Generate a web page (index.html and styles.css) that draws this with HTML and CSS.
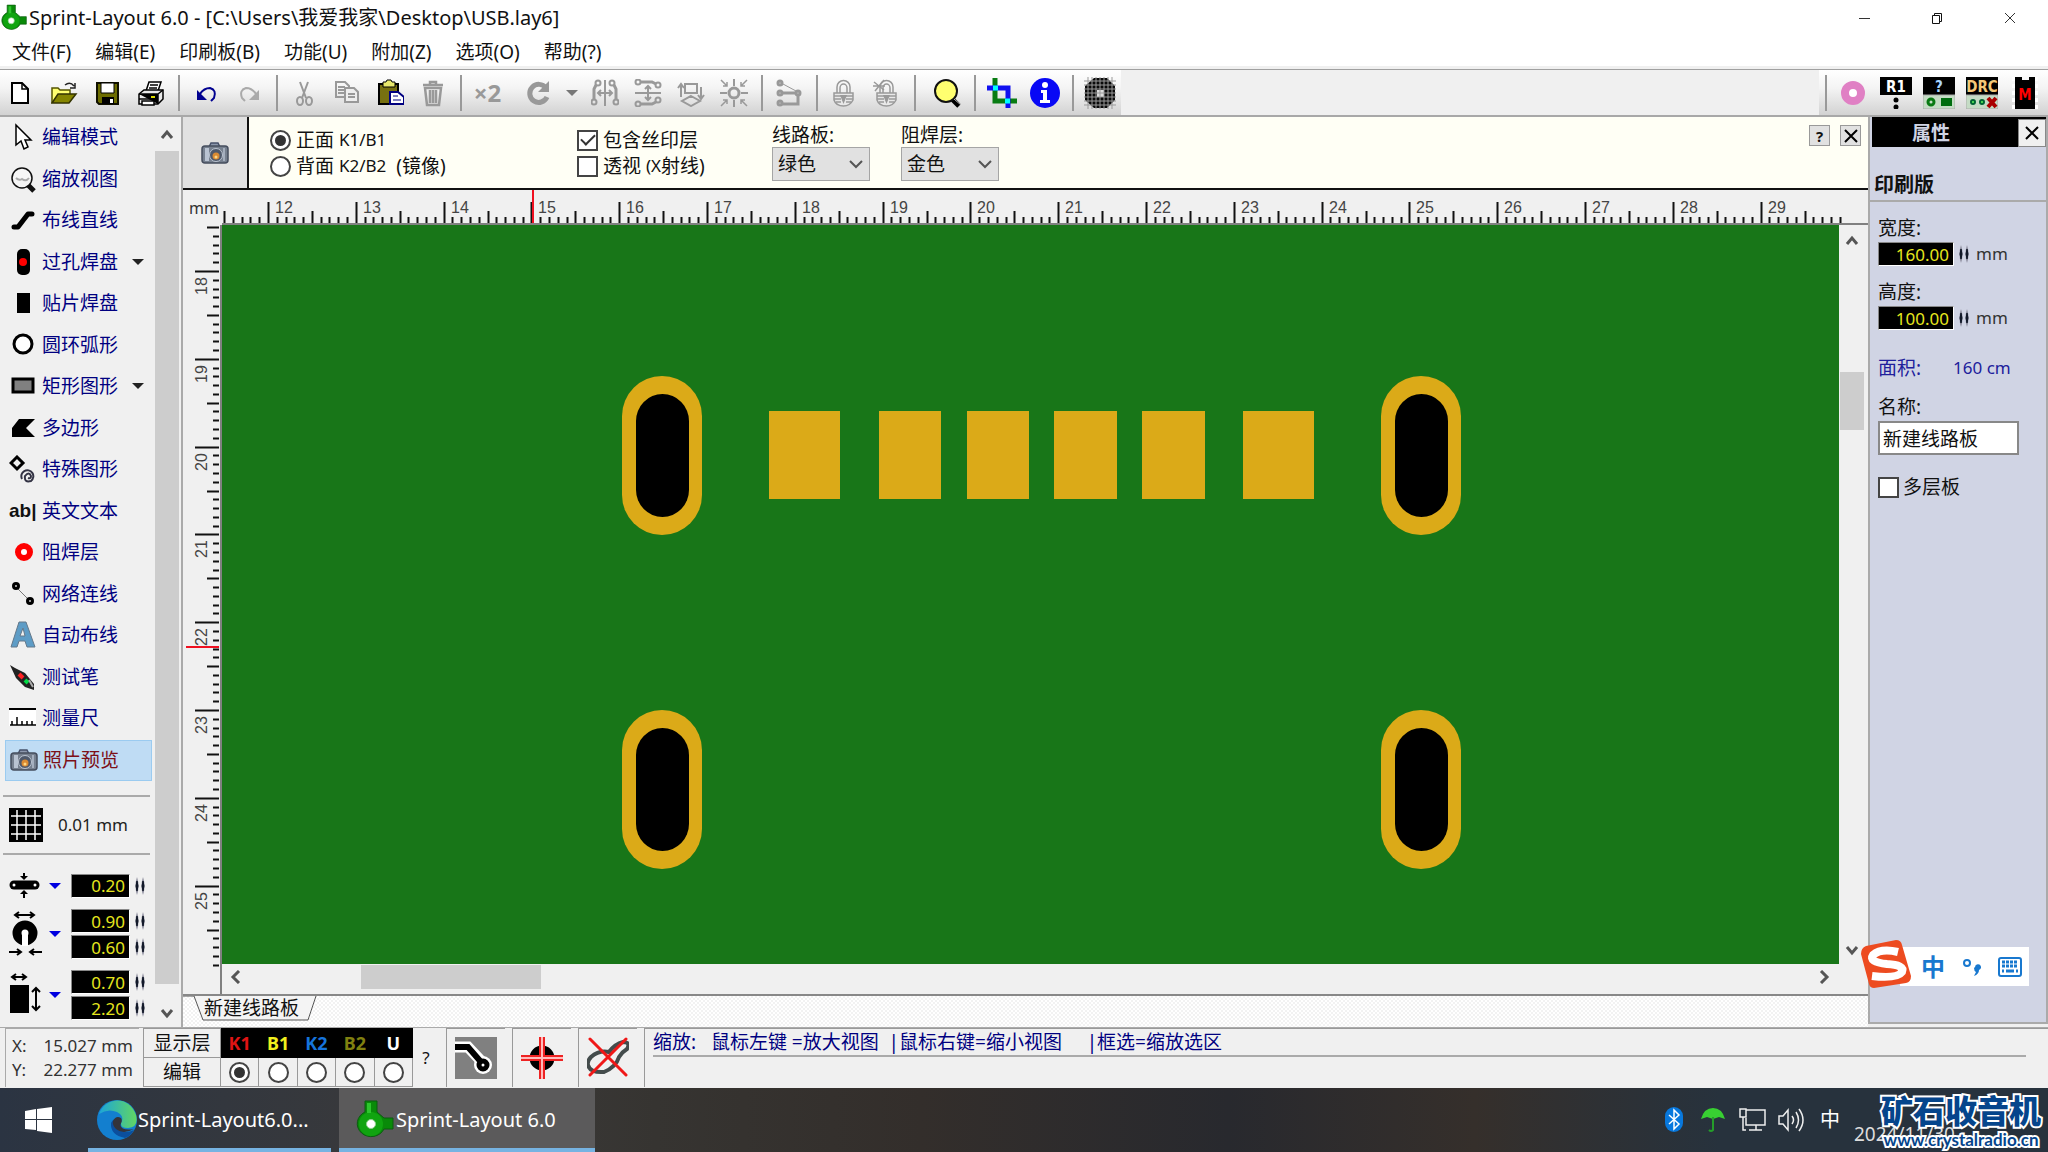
FILE: index.html
```html
<!DOCTYPE html>
<html lang="zh-CN">
<head>
<meta charset="utf-8">
<title>Sprint-Layout 6.0</title>
<link rel="stylesheet" href="styles.css">
</head>
<body>
<svg class="defs" aria-hidden="true">
  <defs>
    <symbol id="spin" viewBox="0 0 10 18"><path d="M2 0Q5 9 2 18Q-1 9 2 0ZM8 0Q11 9 8 18Q5 9 8 0Z" fill="#889"/><path d="M2 4Q4 9 2 14Q0 9 2 4ZM8 4Q10 9 8 14Q6 9 8 4Z" fill="#111828" stroke="#111828" stroke-width="1"/></symbol>
    <symbol id="tri" viewBox="0 0 12 8"><path d="M0 1H12L6 7Z" fill="currentColor"/></symbol>
    <symbol id="up" viewBox="0 0 14 12"><path d="M2 10L7 4L12 10" fill="none" stroke="#555" stroke-width="3"/></symbol>
    <symbol id="down" viewBox="0 0 14 12"><path d="M2 3L7 9L12 3" fill="none" stroke="#555" stroke-width="3"/></symbol>
    <symbol id="camera" viewBox="0 0 28 24">
      <path d="M8 6L10 2H17L19 6" fill="#8c98ad" stroke="#46506a" stroke-width="1.5"/>
      <rect x="1" y="5" width="26" height="17" rx="3" fill="#76808f" stroke="#454d5e" stroke-width="1.5"/>
      <rect x="4" y="7" width="4" height="13" fill="#b9c3d2"/><rect x="22" y="7" width="2" height="13" fill="#a5afbe"/>
      <circle cx="15" cy="14" r="6.500" fill="#4e586a" stroke="#bcc5d2"/>
      <circle cx="15" cy="15" r="3.500" fill="#d98a33"/><circle cx="15" cy="16" r="1.500" fill="#ffd680"/>
    </symbol>
    <symbol id="pcb" viewBox="0 0 38 40">
      <path d="M9 1H21V12L28 18H37V29H28A14 13 0 1 1 9 12Z" fill="#098a09" stroke="#0b5d10"/>
      <circle cx="15" cy="24" r="12" fill="#10a410"/><path d="M11 3H15V13H11Z" fill="#2dc52d"/><circle cx="15" cy="24" r="4.500" fill="#fff" stroke="#8fd08f"/>
    </symbol>
    <symbol id="lock" viewBox="0 0 28 28"><path d="M7 14V8A6 6 0 0 1 20 8V14M10 14V9A3.500 4 0 0 1 17 9V14" fill="none" stroke="#999" stroke-width="1.500"/><path d="M4 14H23V21Q20 27 13.500 27Q6 27 4 21Z" fill="#e8e8e8" stroke="#999" stroke-width="1.500"/><path d="M4 17H11M16 17H23M4 20H11M16 20H23M6 23H11M16 23H21" stroke="#999" stroke-width="1.500"/><path d="M10 16H17L13.500 25Z" fill="#999"/></symbol>
  </defs>
</svg>

<header class="titlebar">
  <svg class="app-icon" viewBox="0 0 38 40"><use href="#pcb"/></svg>
  <h1>Sprint-Layout 6.0 - [C:\Users\我爱我家\Desktop\USB.lay6]</h1>
  <div class="window-buttons">
    <button aria-label="最小化"><svg width="12" height="12"><path d="M1 6.500H12" stroke="#333"/></svg></button>
    <button aria-label="还原"><svg width="12" height="12" fill="none" stroke="#111"><path d="M1.500 3.500H8.500V11.500H1.500Z M3.500 3V1.500H10.500V9.500H9"/></svg></button>
    <button aria-label="关闭"><svg width="12" height="12"><path d="M1 1L11 11M11 1L1 11" stroke="#333"/></svg></button>
  </div>
</header>

<nav class="menu">
  <button>文件(F)</button><button>编辑(E)</button><button>印刷板(B)</button><button>功能(U)</button><button>附加(Z)</button><button>选项(O)</button><button>帮助(?)</button>
</nav>

<div class="toolbar">
  <div class="tools">
    <button aria-label="新建"><svg><path d="M4 4H14L20 10V24H4Z" fill="#fff" stroke="#000" stroke-width="2"/><path d="M14 4V10H20" fill="none" stroke="#000" stroke-width="1.500"/></svg></button>
    <button aria-label="打开"><svg><path d="M1 24V9H7L9 11H19V15" fill="#ffff70" stroke="#555500" stroke-width="1.500"/><path d="M1 24L7 15H25L18 24Z" fill="#858500" stroke="#333300" stroke-width="1.500"/><path d="M14 6Q19 2 23 7M24 4V9H19" fill="none" stroke="#222" stroke-width="1.500"/></svg></button>
    <button aria-label="保存"><svg><path d="M3 4H24V25H5L3 23Z" fill="#6d6d00" stroke="#111100" stroke-width="2"/><path d="M7 4H20V14H7Z" fill="#fff" stroke="#000"/><path d="M8 18H20V25H8Z" fill="#000"/><path d="M16 20H19V24H16Z" fill="#fff"/></svg></button>
    <button aria-label="打印"><svg stroke="#000" stroke-width="1.500"><path d="M9 12L12 3H24L21 12Z" fill="#fff"/><path d="M13 6H21M12 9H20"/><path d="M2 15L7 11H26V20L21 25H2Z" fill="#e8e8e8"/><path d="M2 15H21V25M21 15L26 11M2 20H21"/><path d="M5 22H17V26H5Z" fill="#fff"/><path d="M14 18H18" stroke="#dd0" stroke-width="2"/></svg></button>
    <i class="sep"></i>
    <button aria-label="撤销"><svg><path d="M8 15Q12 9 18 9Q25 11 22 19L19 22" fill="none" stroke="#000090" stroke-width="2"/><path d="M5 11V21H15Z" fill="#000090"/></svg></button>
    <button aria-label="重做" disabled><svg><path d="M21 15Q17 9 11 9Q4 11 7 19L10 22" fill="none" stroke="#aaa" stroke-width="2"/><path d="M24 11V21H14Z" fill="#aaa"/></svg></button>
    <i class="sep"></i>
    <button aria-label="剪切" disabled><svg class="dim"><path d="M10 3L16 19M18 3L12 19"/><ellipse cx="10" cy="22" rx="3" ry="4"/><ellipse cx="19" cy="22" rx="3" ry="4"/></svg></button>
    <button aria-label="复制" disabled><svg class="dim"><path d="M3 3H12L16 7V18H3Z M5 8H12M5 11H12M5 14H12"/><path d="M12 9H21L25 13V23H12Z" fill="#eee"/><path d="M15 15H22M15 18H22"/></svg></button>
    <button aria-label="粘贴"><svg><path d="M3 5H22V25H3Z" fill="#777010" stroke="#000" stroke-width="2"/><path d="M7 3H10L11 1H15L16 3H19V8H7Z" fill="#e8e86c" stroke="#000"/><path d="M14 13H22L28 18V25H14Z" fill="#fff" stroke="#000080" stroke-width="2"/><path d="M17 17H22M17 21H25" stroke="#000080"/></svg></button>
    <button aria-label="删除" disabled><svg class="dim"><path d="M4 6H24M11 6V3H17V6M6 9H22L20 26H8Z M11 11V24M14 11V24M17 11V24" stroke-width="2.500"/></svg></button>
    <i class="sep"></i>
    <button class="times" disabled>×2</button>
    <button class="rotate" aria-label="旋转" disabled><svg><path d="M22 9A9 9 0 1 0 23 18" fill="none" stroke="#999" stroke-width="5"/><path d="M25 2V13H14Z" fill="#999"/></svg></button>
    <button class="drop" aria-label="旋转角度" disabled><svg class="small-tri"><use href="#tri"/></svg></button>
    <button aria-label="水平镜像" disabled><svg class="dim"><path d="M14 1V27M7 14H21M10 11L7 14L10 17M18 11L21 14L18 17"/><circle cx="7" cy="4" r="2.500"/><circle cx="3" cy="23" r="2.500"/><circle cx="21" cy="4" r="2.500"/><circle cx="25" cy="23" r="2.500"/><path d="M5 6L3 10V20M23 6L25 10V20" stroke-width="3"/></svg></button>
    <button aria-label="垂直镜像" disabled><svg class="dim"><path d="M1 14H27M14 7V21M11 10L14 7L17 10M11 18L14 21L17 18"/><circle cx="4" cy="3" r="2.500"/><circle cx="24" cy="6" r="2.500"/><circle cx="4" cy="25" r="2.500"/><circle cx="24" cy="21" r="2.500"/><path d="M7 3H18L22 5M7 25H18L22 23" stroke-width="3"/></svg></button>
    <button aria-label="翻面" disabled><svg class="dim"><path d="M8 5H20V14H8Z M14 17L23 22L14 27L5 22Z M4 18V6M1 9L4 5L7 9M24 8V19M21 16L24 20L27 16" stroke-width="2"/></svg></button>
    <button aria-label="对齐" disabled><svg class="dim"><circle cx="14" cy="14" r="5" stroke-width="3"/><path d="M14 0V7M14 21V28M0 14H7M21 14H28"/><path d="M1 1L7 7M7 3V7H3M27 1L21 7M21 3V7H25M1 27L7 21M3 21H7V25M27 27L21 21M21 25V21H25" stroke-width="1.500"/></svg></button>
    <i class="sep"></i>
    <button aria-label="连接" disabled><svg class="dim"><circle cx="5" cy="4" r="2" stroke-width="3"/><circle cx="5" cy="14" r="2" stroke-width="3"/><circle cx="5" cy="24" r="2" stroke-width="3"/><circle cx="23" cy="14" r="2" stroke-width="3"/><path d="M8 5L21 12" stroke-width="1"/><path d="M8 14H20M8 25H23V17" stroke-width="3"/></svg></button>
    <i class="sep"></i>
    <button aria-label="锁定" disabled><svg><use href="#lock"/></svg></button>
    <button aria-label="解锁" disabled><svg><use href="#lock"/><path d="M1 3L11 11M11 1L2 12M0 7H12" stroke="#999" stroke-width="1.500"/></svg></button>
    <i class="sep"></i>
    <button class="wide" aria-label="缩放"><svg class="info"><path d="M20 21L27 28" stroke="#000" stroke-width="5"/><circle cx="14" cy="13" r="11" fill="#ffff70" stroke="#111" stroke-width="2"/><path d="M22 21L29 27" stroke="#bbb" stroke-width="1"/></svg></button>
    <i class="sep"></i>
    <button aria-label="裁剪"><svg class="info" fill="none" stroke-width="5"><path d="M8 0V23H30" stroke="#087c12"/><path d="M0 10H21V30" stroke="#1010f0"/><path d="M6 10H11M18 23H23" stroke="#0ff"/></svg></button>
    <button aria-label="信息"><svg class="info"><circle cx="15" cy="15" r="15" fill="#0808f5"/><circle cx="15" cy="7" r="3" fill="#fff"/><path d="M11 12H17V22H20V25H10V22H13V15H11Z" fill="#fff"/></svg></button>
    <i class="sep"></i>
    <button aria-label="网格"><svg class="chip"><path d="M10 1H23L31 9V23L23 31H10L1 23V9Z" fill="#0a0a0a"/><path d="M13 13H20V20H13Z" fill="#ddd"/><path d="M4 0V32M8 0V32M12 0V32M16 0V32M20 0V32M24 0V32M28 0V32M0 4H32M0 8H32M0 12H32M0 16H32M0 20H32M0 24H32M0 28H32" stroke="#999" stroke-width="1"/></svg></button>
  </div>
  <div class="tools tools-right">
    <i class="sep"></i>
    <button aria-label="焊盘"><svg><circle cx="14" cy="14" r="8" fill="#fff" stroke="#e080c4" stroke-width="8"/></svg></button>
    <button aria-label="元件"><svg class="chip"><path d="M0 0H32V18H0Z" fill="#000"/><text x="16" y="15" class="chip-text" fill="#fff">R1</text><circle cx="16" cy="23" r="2.500"/><circle cx="16" cy="30" r="2.500"/></svg></button>
    <button aria-label="查询"><svg class="chip"><path d="M0 0H32V18H0Z"/><path d="M0 18H32V32H0Z" fill="#c5dcc5" stroke="#aaa"/><text x="16" y="15" class="chip-text" fill="#a9d5ff">?</text><circle cx="8" cy="25" r="3" fill="none" stroke="#087a12" stroke-width="3"/><path d="M18 21H29V29H18Z" fill="#006d10"/></svg></button>
    <button aria-label="DRC"><svg class="chip"><path d="M0 0H32V18H0Z"/><path d="M0 18H32V32H0Z" fill="#c5dcc5" stroke="#aaa"/><text x="16" y="15" class="chip-text" fill="#f3c878">DRC</text><circle cx="7" cy="25" r="2" fill="#5cf45c" stroke="#063" stroke-width="2"/><circle cx="16" cy="25" r="2" fill="#5cf45c" stroke="#063" stroke-width="2"/><path d="M22 21L30 30M30 21L22 30" stroke="#a00" stroke-width="4"/></svg></button>
    <button aria-label="宏"><svg class="chip"><path d="M5 0V32M27 0V32" stroke="#fff" stroke-width="4" stroke-dasharray="4 3"/><path d="M6 0H13V3H20V0H26V32H6Z"/><text x="16" y="23" class="chip-text" fill="#f00">M</text></svg></button>
  </div>
</div>

<main>
  <aside class="side">
    <div class="side-body">
      <nav class="modes">
        <button><svg><path d="M7 2V22L12 18L15 26L19 24L16 17H22Z" fill="#fff" stroke="#000" stroke-width="1.500"/></svg>编辑模式</button>
        <button><svg><path d="M18 19L25 26" stroke="#111" stroke-width="5"/><circle cx="13" cy="13" r="10" fill="#f6f6f6" stroke="#111" stroke-width="1.500"/><path d="M7 13Q10 16 13 14Q17 17 20 13" fill="none" stroke="#aaa" stroke-width="2"/></svg>缩放视图</button>
        <button><svg><path d="M5 21H9L19 8H23" fill="none" stroke="#000" stroke-width="5" stroke-linecap="round" stroke-linejoin="round"/></svg>布线直线</button>
        <button><svg><rect x="8" y="1" width="13" height="26" rx="5"/><circle cx="14" cy="14" r="4" fill="#f00"/></svg>过孔焊盘<svg class="small-tri"><use href="#tri"/></svg></button>
        <button><svg><path d="M8 4H21V24H8Z"/></svg>贴片焊盘</button>
        <button><svg><circle cx="14" cy="13" r="9" fill="#fff" stroke="#000" stroke-width="3"/></svg>圆环弧形</button>
        <button><svg><path d="M4 7H24V20H4Z" fill="#808080" stroke="#000" stroke-width="3"/></svg>矩形图形<svg class="small-tri"><use href="#tri"/></svg></button>
        <button><svg><path d="M3 23V14L10 5H26L17 14L26 23Z"/></svg>多边形</button>
        <button><svg fill="none"><path d="M8 2L14 8L8 14L2 8Z" stroke="#000" stroke-width="3"/><path d="M13 24A6 6 0 1 1 22 26Q15 28 16 21Q20 16 22 21Q22 24 19 23" stroke="#334" stroke-width="2"/></svg>特殊图形</button>
        <button><span class="ab">ab|</span>英文文本</button>
        <button><svg><circle cx="15" cy="14" r="6" fill="#fff" stroke="#f00" stroke-width="6"/></svg>阻焊层</button>
        <button><svg><path d="M7 7L21 21" stroke="#777"/><circle cx="7" cy="6" r="2.500" fill="#ccc" stroke="#000" stroke-width="3"/><circle cx="21" cy="21" r="2.500" fill="#ccc" stroke="#000" stroke-width="3"/></svg>网络连线</button>
        <button><svg><path d="M2 26L10 1H17L26 26H18L16 20H10L8 26ZM11 15H16L14 7Z" fill="#5d9cc6" stroke="#64788a"/></svg>自动布线</button>
        <button><svg><path d="M1 2L6 5L16 10L25 21V27L16 24L7 15Z" fill="#222"/><path d="M10 11L14 15" stroke="#f22" stroke-width="4"/><path d="M16 17L19 20" stroke="#0d4" stroke-width="4"/><path d="M20 17L24 24" stroke="#aaa" stroke-width="2"/></svg>测试笔</button>
        <button><svg><path d="M0 5H27V22H0Z" fill="#fff"/><path d="M0 5H27" stroke="#000" stroke-width="2"/><path d="M1 21H27M3 21V17M8 21V13M13 21V17M18 21V17M23 21V17" stroke="#000" stroke-width="1.500"/></svg>测量尺</button>
        <button class="active"><svg><use href="#camera"/></svg>照片预览</button>
      </nav>
      <hr>
      <button class="grid-size"><svg><path d="M0 0H34V34H0Z"/><path d="M8 2V32M17 2V32M26 2V32M2 8H32M2 17H32M2 26H32" stroke="#fff" stroke-width="1.500"/></svg>0.01 mm</button>
      <hr>
      <div class="params">
        <div class="param">
          <svg><path d="M5 12H26" stroke="#000" stroke-width="9" stroke-linecap="round"/><circle cx="5" cy="12" r="1.500" fill="#fff"/><circle cx="26" cy="12" r="1.500" fill="#fff"/><path d="M11 3H19L15 7ZM14 0H16V3H14ZM11 21H19L15 17ZM14 21H16V25H14Z"/></svg>
          <button class="blue" aria-label="线宽"><svg class="small-tri"><use href="#tri"/></svg></button>
          <div class="values"><div><input aria-label="走线宽度" value="0.20"><svg class="spin"><use href="#spin"/></svg></div></div>
        </div>
        <div class="param">
          <svg class="tall"><path d="M7 5H24M10 2L6 5L10 8M21 2L25 5L21 8M0 42H11M8 39L12 42L8 45M33 42H22M25 39L21 42L25 45" fill="none" stroke="#000" stroke-width="2"/><circle cx="16" cy="23" r="8" fill="#fff" stroke="#000" stroke-width="9"/><path d="M13 25H19V36H13Z" fill="#fff"/><path d="M12 27V34M20 27V34" stroke="#000" stroke-width="2"/></svg>
          <button class="blue" aria-label="焊盘尺寸"><svg class="small-tri"><use href="#tri"/></svg></button>
          <div class="values"><div><input aria-label="焊盘外径" value="0.90"><svg class="spin"><use href="#spin"/></svg></div><div><input aria-label="焊盘孔径" value="0.60"><svg class="spin"><use href="#spin"/></svg></div></div>
        </div>
        <div class="param">
          <svg class="tall"><path d="M1 14H20V42H1Z"/><path d="M4 6H16M7 3L3 6L7 9M13 3L17 6L13 9M27 18V38M23 21L27 17L31 21M23 35L27 39L31 35" fill="none" stroke="#000" stroke-width="2"/></svg>
          <button class="blue" aria-label="贴片尺寸"><svg class="small-tri"><use href="#tri"/></svg></button>
          <div class="values"><div><input aria-label="贴片宽度" value="0.70"><svg class="spin"><use href="#spin"/></svg></div><div><input aria-label="贴片高度" value="2.20"><svg class="spin"><use href="#spin"/></svg></div></div>
        </div>
      </div>
    </div>
    <div class="vscroll side-scroll"><svg><use href="#up"/></svg><i class="thumb"></i><svg><use href="#down"/></svg></div>
  </aside>

  <section class="work">
    <form class="photo">
      <button type="button" class="camera" aria-label="照片预览"><svg><use href="#camera"/></svg></button>
      <div class="options sides">
        <label><input type="radio" name="side" checked>正面&nbsp; <span>K1/B1</span></label>
        <label><input type="radio" name="side">背面&nbsp; <span>K2/B2</span>&nbsp; (镜像)</label>
      </div>
      <div class="options checks">
        <label><input type="checkbox" checked>包含丝印层</label>
        <label><input type="checkbox">透视&nbsp;<span>(X</span>射线)</label>
      </div>
      <div class="combo"><label for="board">线路板:</label><div class="select"><select id="board"><option>绿色</option></select><svg><path d="M1 2L7 8L13 2" fill="none" stroke="#555" stroke-width="2"/></svg></div></div>
      <div class="combo"><label for="mask">阻焊层:</label><div class="select"><select id="mask"><option>金色</option></select><svg><path d="M1 2L7 8L13 2" fill="none" stroke="#555" stroke-width="2"/></svg></div></div>
      <div class="photo-buttons"><button type="button">?</button><button type="button" aria-label="关闭"><svg width="14" height="14"><path d="M1 1L13 13M13 1L1 13" stroke="#000" stroke-width="2"/></svg></button></div>
    </form>
    <div class="stage">
      <div class="corner">mm</div>
      <svg class="ruler-top" data-first="12" data-origin="46" data-cursor="311"></svg>
      <svg class="ruler-left" data-first="18" data-origin="46" data-cursor="422"></svg>
      <svg class="board">
        <g fill="#dbaa18">
          <rect x="400" y="151" width="80" height="159" rx="40"/><rect x="1159" y="151" width="80" height="159" rx="40"/>
          <rect x="400" y="485" width="80" height="159" rx="40"/><rect x="1159" y="485" width="80" height="159" rx="40"/>
          <rect x="547" y="186" width="71" height="88"/><rect x="657" y="186" width="62" height="88"/><rect x="745" y="186" width="62" height="88"/><rect x="832" y="186" width="63" height="88"/><rect x="920" y="186" width="63" height="88"/><rect x="1021" y="186" width="71" height="88"/>
        </g>
        <g fill="#000">
          <rect x="414" y="169" width="53" height="123" rx="27"/><rect x="1173" y="169" width="53" height="123" rx="27"/>
          <rect x="414" y="503" width="53" height="123" rx="27"/><rect x="1173" y="503" width="53" height="123" rx="27"/>
        </g>
      </svg>
      <div class="vscroll board-scroll"><svg><use href="#up"/></svg><i class="gap-before"></i><i class="thumb"></i><i class="gap-after"></i><svg><use href="#down"/></svg></div>
      <div class="hscroll"><svg><path d="M10 1L4 7L10 13" fill="none" stroke="#555" stroke-width="3"/></svg><i class="thumb"></i><svg class="right"><path d="M3 1L9 7L3 13" fill="none" stroke="#555" stroke-width="3"/></svg></div>
    </div>
    <div class="tabs"><button><svg><path d="M0 0H11L20 24H125L133 0" fill="#f4f4f4" stroke="#555" stroke-width="1"/></svg><span>新建线路板</span></button></div>
  </section>

  <aside class="props">
    <header><h2>属性</h2><button aria-label="关闭"><svg width="14" height="14"><path d="M1 1L13 13M13 1L1 13" stroke="#000" stroke-width="2"/></svg></button></header>
    <h3>印刷版</h3>
    <div class="fields">
      <label for="w">宽度:</label>
      <div class="size"><input id="w" value="160.00"><svg class="spin"><use href="#spin"/></svg>mm</div>
      <label for="h">高度:</label>
      <div class="size"><input id="h" value="100.00"><svg class="spin"><use href="#spin"/></svg>mm</div>
      <p><span>面积:</span><span class="area">160 cm</span></p>
      <label for="name">名称:</label>
      <input id="name" class="name" value="新建线路板">
      <label class="multi"><input type="checkbox">多层板</label>
    </div>
  </aside>
</main>

<footer class="status">
  <dl class="coords"><dt>X:</dt><dd>15.027 mm</dd><dt>Y:</dt><dd>22.277 mm</dd></dl>
  <table class="layers">
    <tr><th>显示层</th><td class="k1">K1</td><td class="b1">B1</td><td class="k2">K2</td><td class="b2">B2</td><td class="u">U</td></tr>
    <tr><th>编辑</th><td><input type="radio" name="layer" aria-label="K1" checked></td><td><input type="radio" name="layer" aria-label="B1"></td><td><input type="radio" name="layer" aria-label="K2"></td><td><input type="radio" name="layer" aria-label="B2"></td><td><input type="radio" name="layer" aria-label="U"></td></tr>
  </table>
  <button class="help">?</button>
  <button class="toggle" aria-label="走线"><svg><path d="M0 0H42V42H0Z" fill="#808080"/><path d="M0 10H13L28 26" fill="none" stroke="#fff" stroke-width="11"/><circle cx="28" cy="28" r="9" fill="#fff"/><path d="M0 10H13L26 25" fill="none" stroke="#000" stroke-width="6"/><circle cx="28" cy="28" r="4" fill="#fff" stroke="#000" stroke-width="5"/></svg></button>
  <button class="toggle" aria-label="十字"><svg><circle cx="21" cy="21" r="8" fill="#fff" stroke="#000" stroke-width="9"/><path d="M21 0V42M0 21H42" stroke="#e22" stroke-width="6"/><path d="M21 0V42M0 21H42" stroke="#fbb" stroke-width="2"/></svg></button>
  <button class="toggle" aria-label="橡皮筋"><svg><path d="M4 20Q12 13 22 15Q28 7 36 5Q44 5 40 12Q35 15 32 20Q29 30 17 35Q3 36 1 28Q0 24 4 20Z" fill="none" stroke="#444c4c" stroke-width="4"/><path d="M3 2L39 38M39 2L3 38" stroke="#f01818" stroke-width="3" stroke-linecap="round"/></svg></button>
  <div class="hint"><p>缩放:&nbsp;&nbsp; 鼠标左键 =放大视图&nbsp; |鼠标右键=缩小视图&nbsp; &nbsp; &nbsp;|框选=缩放选区</p></div>
</footer>

<div class="taskbar">
  <button class="start" aria-label="开始"><svg><path d="M0 4L11 2V12H0ZM12 2L27 0V12H12ZM0 13H11V23L0 22ZM12 13H27V26L12 24Z" fill="#fff"/></svg></button>
  <button class="task"><svg viewBox="0 0 40 40"><defs><linearGradient id="eg" x1="0" x2="1"><stop stop-color="#1ca5d8"/><stop offset="1" stop-color="#61d663"/></linearGradient></defs><circle cx="20" cy="20" r="20" fill="#137fcf"/><path d="M2 14C8 -3 32 -5 39 15Q42 27 31 28Q23 28 24 23Q28 16 20 12Q11 8 2 14Z" fill="url(#eg)"/><path d="M24 23Q18 15 14 23Q13 35 28 38Q34 36 37 30Q23 36 24 23Z" fill="#0b4f9d"/><path d="M16 21Q19 15 24 18Q26 21 23 25Q25 31 37 29Q26 35 19 29Q15 25 16 21Z" fill="#34343a"/></svg>Sprint-Layout6.0...</button>
  <button class="task current"><svg viewBox="0 0 38 40"><use href="#pcb"/></svg>Sprint-Layout 6.0</button>
  <div class="tray">
    <svg><rect x="5" y="1" width="18" height="25" rx="9" fill="#0878dd"/><path d="M9 9L19 18L14 23V4L19 9L9 18" fill="none" stroke="#fff" stroke-width="1.500"/></svg>
    <svg><path d="M2 13Q5 2 14 2Q23 2 26 13L20 11L14 13L8 11Z" fill="#38cf32"/><path d="M14 11V24Q12 26 10 24" fill="none" stroke="#259d2a" stroke-width="2"/></svg>
    <svg fill="none" stroke="#eee" stroke-width="1.500"><path d="M8 4H27V19H8V12M18 19V24M11 24H24M2 3H8V11H2ZM5 11V24H8"/></svg>
    <svg fill="none" stroke="#eee" stroke-width="1.500"><path d="M2 10H6L11 4V24L6 18H2ZM15 10Q18 14 15 18M19 6Q24 14 19 22M22 3Q30 14 22 25"/></svg>
    <span class="lang">中</span>
    <time>2024/11/30</time>
  </div>
</div>

<div class="ime">
  <svg class="sogou" viewBox="0 0 50 48"><path d="M5 6L35 0Q40 0 41 5L50 36Q50 42 45 43L13 48Q9 48 8 44L0 14Q0 8 5 6Z" fill="#ed4b20"/><path d="M37 12Q20 8 12 15Q7 22 26 24Q44 25 41 32Q36 39 11 36" fill="none" stroke="#fff" stroke-width="8"/></svg>
  <span>中</span>
  <svg class="punct"><circle cx="5" cy="6" r="3" fill="none" stroke="#1878cf" stroke-width="2"/><path d="M13 10A3 3 0 1 1 17 13Q17 17 12 19L14 15Q12 14 12 11Z" fill="#1878cf"/></svg>
  <svg class="keys"><rect x="1" y="1" width="22" height="18" rx="2" fill="#fff" stroke="#1878cf" stroke-width="2"/><path d="M4 5H20M4 9H20" stroke="#1878cf" stroke-width="3" stroke-dasharray="3 1"/><path d="M4 14H6M8 14H16M18 14H20" stroke="#1878cf" stroke-width="3"/></svg>
</div>
<div class="mark"><strong>矿石收音机</strong><span>www.crystalradio.cn</span></div>
<script src="rulers.js"></script>
</body>
</html>
```
FILE: rulers.js
```js
// Draws the millimetre ticks and labels of both rulers.
const PX_PER_MM = 87.8;

function addNode(parent, name, attrs, text) {
  const node = document.createElementNS('http://www.w3.org/2000/svg', name);
  for (const key in attrs) node.setAttribute(key, attrs[key]);
  if (text !== undefined) node.textContent = text;
  parent.appendChild(node);
}

function drawRuler(svg, vertical) {
  const first = Number(svg.dataset.first);
  const origin = Number(svg.dataset.origin);
  const box = svg.getBoundingClientRect();
  const length = vertical ? box.height - 22 : box.width - 25;
  const edge = vertical ? 36 : 33;
  for (let i = -5; ; i++) {
    const pos = Math.round(origin + i * PX_PER_MM / 10);
    if (pos > length) break;
    if (pos < 1) continue;
    const size = i % 10 === 0 ? (vertical ? 24 : 21) : i % 5 === 0 ? 12 : 6;
    addNode(svg, 'path', {
      class: 'tick',
      d: vertical ? `M${edge - size} ${pos + 0.5}H${edge}` : `M${pos + 0.5} ${edge - size}V${edge}`
    });
    if (i % 10 === 0) {
      const attrs = vertical
        ? { transform: `translate(24 ${pos + 24}) rotate(-90)` }
        : { x: pos + 7, y: 23 };
      addNode(svg, 'text', attrs, first + i / 10);
    }
  }
  const c = Number(svg.dataset.cursor);
  addNode(svg, 'path', { class: 'cursor', d: vertical ? `M3 ${c}H36` : `M${c} 0V34` });
}

drawRuler(document.querySelector('.ruler-top'), false);
drawRuler(document.querySelector('.ruler-left'), true);
```
FILE: styles.css
```css
* { box-sizing: border-box; }
body {
  margin: 0;
  height: 100vh;
  display: flex;
  flex-direction: column;
  background: #f0f0f0;
  color: #111;
  font: 19px/24px "Noto Sans", "Noto Sans CJK SC", sans-serif;
  overflow: hidden;
}
button, input, select { font: inherit; color: inherit; margin: 0; }
button { border: 0; padding: 0; background: none; }
h1, h2, h3, p, dl, dd { margin: 0; font-weight: normal; }
svg { display: block; flex: none; }
.defs { position: absolute; width: 0; height: 0; }

.titlebar { height: 36px; display: flex; align-items: center; background: #fff; }
.app-icon { width: 26px; height: 30px; margin: 0 2px 0 1px; }
.titlebar h1 { font-size: 20px; white-space: nowrap; }
.window-buttons { margin-left: auto; display: flex; padding-right: 2px; }
.window-buttons button { width: 73px; height: 36px; display: grid; place-items: center; }

.menu { height: 33px; display: flex; background: #fff; border-bottom: 3px solid #f0f0f0; }
.menu button { padding: 0 12px; height: 32px; }

.toolbar { height: 48px; display: flex; justify-content: space-between; border-top: 1px solid #a0a0a0; border-bottom: 2px solid #a8a8a8; }
.tools { display: flex; align-items: center; background: linear-gradient(#fff, #f4f4f4 40%, #d2d2d2); }
.tools-right { padding-right: 2px; }
.tools button { width: 43px; height: 44px; display: grid; place-items: center; }
.tools svg { width: 28px; height: 28px; }
.tools .info { width: 30px; height: 30px; }
.tools .chip { width: 32px; height: 32px; }
.tools .wide { width: 48px; padding-left: 5px; }
.tools .rotate { width: 52px; padding-left: 5px; }
.tools .drop { width: 22px; color: #777; }
.tools .small-tri, .small-tri { width: 12px; height: 8px; }
.tools .times { font: bold 24px/28px "Noto Sans", sans-serif; color: #999; }
.sep { width: 12px; height: 36px; background: linear-gradient(#999, #999) 6px 0 / 2px 100% no-repeat; }
.dim { fill: none; stroke: #999; stroke-width: 2; }
.chip-text { font: bold 15px "DejaVu Sans Condensed", "DejaVu Sans", sans-serif; text-anchor: middle; }

main { flex: 1; min-height: 0; display: flex; }

.side { width: 183px; display: flex; border-right: 2px solid #aaa; }
.side-body { flex: 1; min-width: 0; padding-left: 3px; }
.modes { height: 664px; display: grid; grid-auto-rows: 1fr; color: #000080; }
.modes button { display: flex; align-items: center; width: 147px; padding-left: 5px; border: 1px solid transparent; margin: 0 0 1px; }
.modes svg { width: 28px; height: 28px; margin-right: 5px; }
.modes button .small-tri { width: 12px; height: 8px; margin: 0 0 0 14px; color: #222; }
.modes .ab { width: 33px; color: #111; font: bold 19px/24px "Liberation Sans", sans-serif; text-align: left; }
.modes .active { background: #bfdcf4; border-color: #9bcbf0; color: #7d1018; margin: 0 0 0 2px; padding-left: 4px; }
hr { width: 147px; height: 2px; margin: 0; border: 0; background: #aaa; }
.side-body > hr:first-of-type { margin-top: 14px; }
.grid-size { height: 56px; display: flex; align-items: center; gap: 15px; padding-left: 6px; font-size: 17px; color: #222; }
.grid-size svg { width: 34px; height: 34px; }
.params { padding: 18px 0 0 6px; display: grid; gap: 11px; }
.param { display: flex; align-items: center; }
.param > svg { width: 33px; height: 25px; }
.param > .tall { height: 48px; }
.blue { color: #0000e0; width: 29px; padding-right: 3px; display: grid; place-items: center; }
.values { display: grid; gap: 2px; }
.values div { display: flex; align-items: center; gap: 5px; }
.values input, .size input {
  width: 59px; height: 24px; padding: 0 4px; border: 1px solid #888; border-bottom-color: #fff; border-right-color: #fff;
  background: #000; color: #e6e61e; font-size: 17px; line-height: 20px; text-align: right;
}
.spin { width: 10px; height: 18px; }

.vscroll { display: flex; flex-direction: column; align-items: center; }
.vscroll svg { width: 14px; height: 12px; margin: 11px 0; }
.thumb { background: #cdcdcd; }
.side-scroll { width: 24px; margin-right: 2px; }
.side-scroll .thumb { flex: 1; width: 24px; }
.side-scroll svg:last-child { margin: 23px 0 8px; }

.work { flex: 1; min-width: 0; display: flex; flex-direction: column; }
.photo { height: 73px; display: flex; background: #fffff5; border-bottom: 2px solid #111; }
.camera { width: 66px; background: #e1e1e1; border-right: 2px solid #111; display: grid; place-items: center; }
.camera svg { width: 28px; height: 26px; }
.options { display: grid; align-content: start; grid-auto-rows: 26px; padding-top: 10px; }
.options label { display: flex; align-items: center; white-space: nowrap; }
.options input { margin-right: 5px; }
.options span { font-size: 17px; }
.sides { margin-left: 21px; width: 307px; }
.checks { width: 195px; }
.combo { width: 129px; padding-top: 7px; }
.combo label { display: block; line-height: 23px; }
.select { display: grid; width: 98px; }
.select > * { grid-area: 1 / 1; }
.select select { height: 34px; padding: 0 5px; appearance: none; border: 1px solid #a5a5a5; border-radius: 0; background: #e1e1e1; }
.select svg { width: 14px; height: 10px; place-self: center end; margin-right: 7px; pointer-events: none; }
.photo-buttons { margin-left: auto; display: flex; gap: 10px; padding: 8px 7px 0 0; }
.photo-buttons button { width: 21px; height: 21px; display: grid; place-items: center; background: #e1e1e1; border: 1px solid #999; font: bold 15px/18px "Noto Sans", sans-serif; }

input[type="radio"], input[type="checkbox"] { appearance: none; flex: none; width: 21px; height: 21px; background: #fff; border: 2px solid #444; display: grid; place-items: center; }
input[type="radio"] { border-radius: 50%; }
input[type="radio"]:checked::before { content: ""; width: 11px; height: 11px; border-radius: 50%; background: #333; }
input[type="checkbox"]:checked::before { content: ""; width: 12px; height: 6px; border: solid #333; border-width: 0 0 2px 2px; transform: translateY(-2px) rotate(-45deg); }

.stage { flex: 1; min-height: 0; display: grid; grid-template: 35px minmax(0, 1fr) 30px / 39px minmax(0, 1fr) 29px; border-bottom: 2px solid #888; }
.corner { padding: 6px 0 0 6px; font-size: 16px; color: #333; }
.ruler-top, .ruler-left { width: 100%; height: 100%; font: 16px "Liberation Sans", sans-serif; fill: #444; }
.ruler-top { grid-column: 2 / 4; border-bottom: 2px solid #808080; }
.ruler-left { grid-row: 2 / 4; border-right: 2px solid #808080; }
.tick { stroke: #111; stroke-width: 2; }
.cursor { stroke: #f01020; stroke-width: 2; }
.board { width: 100%; height: 100%; background: #187618; }
.board-scroll { padding-right: 3px; }
.board-scroll svg:first-child { margin-top: 9px; }
.board-scroll .gap-before { flex: 116; }
.board-scroll .thumb { width: 24px; height: 58px; }
.board-scroll .gap-after { flex: 510; }
.board-scroll svg:last-child { margin: 8px 0; }
.hscroll { grid-column: 2 / 4; height: 26px; display: flex; align-items: center; }
.hscroll svg { width: 14px; height: 14px; margin-left: 7px; }
.hscroll .right { margin: 0 36px 0 auto; }
.hscroll .thumb { width: 180px; height: 24px; margin-left: 118px; }
.tabs { height: 31px; background: repeating-conic-gradient(#fff 0 25%, #f2f2f2 0 50%) 0 0 / 4px 4px; }
.tabs button { display: grid; height: 25px; text-align: left; }
.tabs button > * { grid-area: 1 / 1; }
.tabs svg { width: 134px; height: 25px; }
.tabs span { padding-left: 21px; }

.props { width: 180px; margin-bottom: 3px; background: #d0d4e4; border: 2px solid #aaa; border-top: 0; }
.props header { display: flex; height: 30px; padding-top: 2px; background: #000; margin-left: 2px; }
.props h2 { flex: 1; padding: 2px 28px 0 0; text-align: center; font-weight: bold; color: #d0d4e4; font-size: 19px; }
.props header button { width: 28px; display: grid; place-items: center; background: #f0f0f0; border: 1px solid #888; }
.props h3 { height: 55px; padding: 26px 0 0 4px; font-size: 20px; font-weight: bold; border-bottom: 2px solid #aaa; }
.fields { padding: 14px 0 0 8px; display: grid; justify-items: start; }
.size { display: flex; align-items: center; height: 26px; margin: 1px 0 13px; font-size: 17px; color: #333; }
.size input { width: 76px; }
.size .spin { margin: 0 7px 0 5px; }
.fields p { display: flex; gap: 32px; margin: 12px 0 15px; color: #20209c; }
.area { font-size: 17px; }
.fields .name { width: 141px; height: 34px; margin-top: 2px; padding: 0 3px; border: 2px solid #888; }
.multi { display: flex; align-items: center; gap: 4px; margin-top: 20px; }

.status { height: 61px; display: flex; border-top: 1px solid #aaa; padding: 0 0 1px 5px; }
.coords { width: 134px; display: grid; grid-template-columns: 30px 1fr; align-content: center; padding: 0 6px 0 6px; font-size: 17px; color: #333; border: solid #aaa; border-width: 1px 0 0 1px; }
.coords dd { text-align: right; }
.layers { margin-left: 4px; border-collapse: collapse; height: 59px; table-layout: fixed; width: 270px; }
.layers th { width: 77px; font-weight: normal; }
.layers th, .layers td { padding: 0; border: 1px solid #999; text-align: center; vertical-align: middle; height: 29px; line-height: 24px; }
.layers tr:first-child td { background: #000; border-color: #000; font: bold 18px/24px "Noto Sans", sans-serif; }
.layers input { margin: auto; }
.layers .k1 { color: #e01414; }
.layers .b1 { color: #f0f01e; }
.layers .k2 { color: #1674dc; }
.layers .b2 { color: #808010; }
.layers .u { color: #fff; }
.help { width: 26px; font-size: 17px; }
.toggle { width: 59px; margin-left: 7px; border: solid #999; border-width: 1px 0 0 1px; display: grid; place-items: center; }
.toggle svg { width: 42px; height: 42px; }
.hint { flex: 1; margin-left: 7px; padding: 1px 22px 0 8px; border: solid #999; border-width: 1px 0 0 1px; color: #000080; white-space: pre; }
.hint p { border-bottom: 2px solid #aaa; height: 27px; }

.taskbar { height: 64px; display: flex; background: linear-gradient(90deg, #2b3442 0, #3b3a3a 22%, #363431 32%, #332e2b 45%, #28292e 60%, #352f2b 72%, #27323d 84%, #27323d); color: #fff; font: 20px/26px "Noto Sans", "Noto Sans CJK SC", sans-serif; }
.start { width: 88px; padding-left: 25px; }
.start svg { width: 27px; height: 26px; }
.task { display: flex; align-items: center; gap: 1px; height: 64px; width: 243px; padding: 3px 0 0 9px; border-bottom: 4px solid #76b3e2; white-space: nowrap; }
.task svg { width: 40px; height: 40px; }
.current { width: 256px; margin-left: 8px; padding-left: 16px; background: #5b5a5b; }
.tray { margin-left: auto; display: flex; align-items: center; gap: 10px; padding-right: 93px; }
.tray svg { width: 29px; height: 28px; }
.tray .lang { width: 28px; text-align: center; }
.tray time { margin: 28px 0 0; color: #ddd; font-size: 19px; }

.ime { position: absolute; right: 19px; bottom: 166px; height: 39px; width: 129px; display: flex; align-items: center; padding-left: 21px; background: #fff; color: #1878cf; }
.ime span { font-weight: bold; font-size: 24px; }
.sogou { position: absolute; left: -39px; top: -7px; width: 50px; height: 48px; }
.punct { width: 19px; height: 20px; margin-left: 17px; }
.keys { width: 24px; height: 20px; margin-left: 17px; }
.mark { position: absolute; right: 7px; bottom: 0; display: grid; justify-items: center; color: #05458c; -webkit-text-stroke: 4px #fff; paint-order: stroke fill; }
.mark strong { font: 900 32px/38px "Noto Sans CJK SC", sans-serif; }
.mark span { font: bold 17px/24px Lato, sans-serif; }
```
